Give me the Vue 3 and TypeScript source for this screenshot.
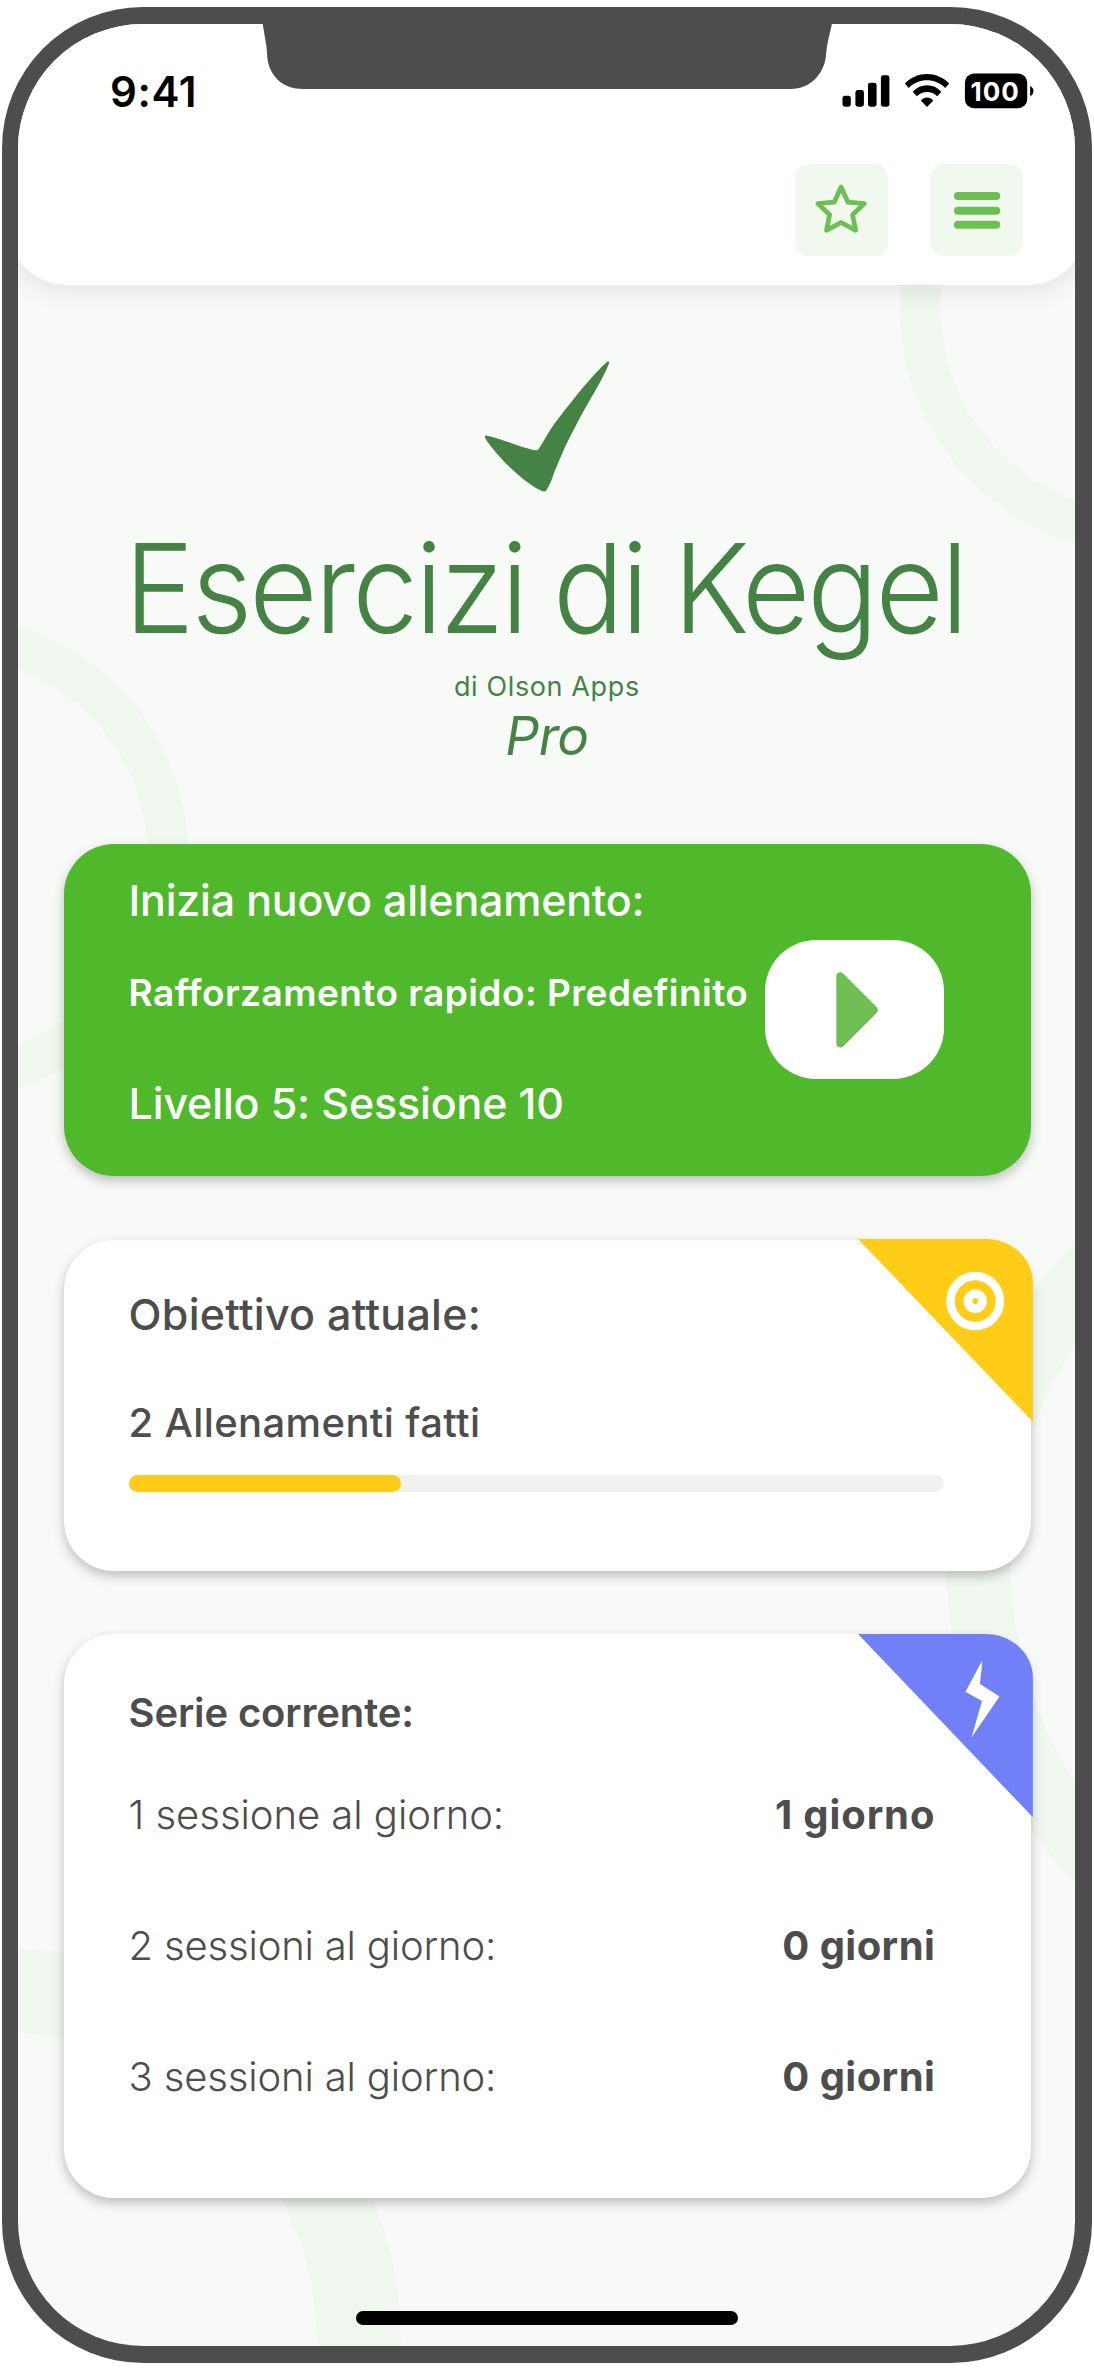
<script setup lang="ts">
interface Streak {
  label: string
  value: string
  labelTracking: string
  valueTracking: string
}

const streaks: Streak[] = [
  { label: '1 sessione al giorno:', value: '1 giorno', labelTracking: '-0.03px', valueTracking: '0.88px' },
  { label: '2 sessioni al giorno:', value: '0 giorni', labelTracking: '-0.17px', valueTracking: '0.45px' },
  { label: '3 sessioni al giorno:', value: '0 giorni', labelTracking: '-0.15px', valueTracking: '0.45px' },
]

const progress = 33.35
</script>

<template>
  <div class="phone">
    <div class="screen">
      <svg class="rings" viewBox="18.5 24.3 1057 2321.4" aria-hidden="true">
        <g fill="none" stroke="#eff7ee">
          <circle cx="1144.8" cy="309" r="224.2" stroke-width="40.5" />
          <circle cx="-52" cy="857.3" r="221" stroke-width="40.5" />
          <circle cx="1411.9" cy="1563" r="433" stroke-width="64" />
          <circle cx="6.5" cy="2344" r="353" stroke-width="84" />
        </g>
      </svg>

      <header class="topbar">
        <div class="status">
          <span class="clock">9:41</span>
          <svg class="status-icons" viewBox="842 73 193 36">
            <rect x="842.5" y="95.7" width="8.3" height="11" rx="2.4" />
            <rect x="855.4" y="90" width="8.5" height="16.7" rx="2.4" />
            <rect x="868" y="82.7" width="8.6" height="24" rx="2.4" />
            <rect x="880.9" y="75.3" width="8.5" height="31.4" rx="2.4" />
            <path d="M904.9 83.6 C917 70.9 937 70.9 949.2 83.6 L945.2 88 C935 77.8 919 77.8 908.7 88Z" />
            <path d="M912.7 91.8 C920.5 83.2 933.5 83.2 941.4 91.8 L937.3 96.3 C931.5 90.6 922.5 90.6 916.8 96.3Z" />
            <path d="M920.8 100.4 C924.3 96.4 929.8 96.4 933.3 100.4 L927 106.9Z" />
            <rect x="964.9" y="73.6" width="62.3" height="34.6" rx="9" />
            <path d="M1030.2 86 C1034.6 88 1034.6 94 1030.2 96.2Z" />
            <text x="995.2" y="100.6" text-anchor="middle">100</text>
          </svg>
        </div>
        <nav class="actions">
          <button class="icon-btn" aria-label="Preferiti">
            <svg width="93" height="92" viewBox="795 163.7 93 92.3">
              <path
                d="M841.1 186.8 L848 202 L864.4 203.4 L852.6 214.5 L855.7 230.2 L841.1 222.4 L826.5 230.2 L829.6 214.5 L817.8 203.4 L834.2 202Z"
                fill="none" stroke="#6dbf53" stroke-width="4.8" stroke-linejoin="round"
              />
            </svg>
          </button>
          <button class="icon-btn" aria-label="Menu">
            <svg width="93" height="92" viewBox="929.7 163.7 93 92.3">
              <path d="M957.6 195.7H996M957.6 210.6H996M957.6 224.7H996" stroke="#6dbf53" stroke-width="8" stroke-linecap="round" />
            </svg>
          </button>
        </nav>
      </header>

      <section class="hero">
        <svg class="logo" viewBox="483 361 128 132" aria-hidden="true">
          <path
            fill="#458345"
            d="M484.8 436.6 C484.6 435.4 485.4 435.3 486.8 435.7 C502 438.8 519 446.5 532.6 449.8 C537.5 451 538 450.2 540 447 C543.5 441.5 546.5 435.5 549.5 431 C556 421 563.5 411.5 571 402.5 C581 389.5 594.5 373.5 605.5 363.2 C608.5 360.6 610 361.2 608.8 364 C603 379.5 588 402 578 421.5 C571.5 434 567.5 441.5 563.5 450.5 C559 461 556.5 466.5 553.5 474.5 C551.5 480.5 549.5 485.5 546.6 490 C545.6 491.8 543.8 491.8 541.8 491 C537.5 489.2 534 487 530 484 C519 476.5 504 463 491 446.5 C487.5 442 485.2 439 484.8 436.6Z"
          />
        </svg>
        <h1>Esercizi di Kegel</h1>
        <p class="byline">di Olson Apps</p>
        <p class="edition">Pro</p>
      </section>

      <main class="cards">
        <section class="card start">
          <div class="start-text">
            <p class="lead">Inizia nuovo allenamento:</p>
            <p class="routine">Rafforzamento rapido: Predefinito</p>
            <p class="level">Livello 5: Sessione 10</p>
          </div>
          <button class="play" aria-label="Avvia">
            <svg width="42" height="76" viewBox="835.6 972 42 76">
              <path
                fill="#6fbe52"
                d="M835.9 976.5 C835.9 972.3 840.3 970.8 843.2 974 L876 1006.8 C878 1008.8 878 1011.2 876 1013.2 L843.2 1046 C840.3 1049 835.9 1047.5 835.9 1043.3Z"
              />
            </svg>
          </button>
        </section>

        <section class="card goal">
          <svg class="corner" viewBox="857.8 1239.3 175 183">
            <path fill="#ffcc17" d="M857.8 1239.3H984.8C1012 1239.3 1032.7 1259 1032.7 1283V1422Z" />
            <ellipse cx="975" cy="1301.4" rx="24.7" ry="25" fill="none" stroke="#fff" stroke-width="8.5" />
            <ellipse cx="975" cy="1301.4" rx="7.3" ry="7.5" fill="none" stroke="#fff" stroke-width="8.8" />
          </svg>
          <p class="goal-title">Obiettivo attuale:</p>
          <p class="goal-count">2 Allenamenti fatti</p>
          <div class="track"><div class="fill" :style="{ width: progress + '%' }"></div></div>
        </section>

        <section class="card streak">
          <svg class="corner" viewBox="857.8 1633.7 175 183">
            <path fill="#7280f7" d="M857.8 1633.7H984.8C1012 1633.7 1032.7 1653.4 1032.7 1677.4V1817Z" />
            <path fill="#fff" d="M982.2 1660 L965.2 1691.4 L981.8 1700.8 L971.4 1737 L999.3 1696.3 L979.8 1683.7Z" />
          </svg>
          <p class="streak-title">Serie corrente:</p>
          <div class="rows">
            <div v-for="row in streaks" :key="row.label" class="row">
              <span class="row-label" :style="{ letterSpacing: row.labelTracking }">{{ row.label }}</span>
              <span class="row-value" :style="{ letterSpacing: row.valueTracking }">{{ row.value }}</span>
            </div>
          </div>
        </section>
      </main>

      <div class="home-indicator"></div>
    </div>

    <svg class="notch" viewBox="262 23 571 67" aria-hidden="true">
      <path fill="#4d4d4d" d="M262.8 23V24.5L266.5 47C267.1 52 267 56 267.8 61C271 77.5 284 89 302.5 89H791C810 89 824.5 74 826 55C826.3 50 827 46 827.8 42L831.8 24.5V23Z" />
    </svg>
  </div>
</template>

<style>
body {
  background: #fff;
}
</style>

<style scoped>
* {
  box-sizing: border-box;
}

p,
h1 {
  margin: 0;
  font-weight: inherit;
  white-space: nowrap;
}

button {
  border: 0;
  padding: 0;
  display: flex;
  align-items: center;
  justify-content: center;
}

svg {
  display: block;
}

.phone {
  position: relative;
  width: 1090.4px;
  height: 2355.6px;
  margin: 7.1px 1.7px 0;
  padding: 17.2px 16.7px 16.9px;
  border-radius: 141px;
  background: #4d4d4d;
  font-family: Inter, 'Liberation Sans', sans-serif;
  color: #4d4d4d;
}

.screen {
  position: relative;
  display: flex;
  flex-direction: column;
  height: 100%;
  overflow: hidden;
  border-radius: 125px;
  background: #f8faf8;
}

.rings {
  position: absolute;
  inset: 0;
  width: 100%;
  height: 100%;
}

.notch {
  position: absolute;
  left: 260.3px;
  top: 15.9px;
  width: 571px;
  height: 67px;
}

.topbar {
  position: relative;
  flex: none;
  height: 260.4px;
  margin: 0 -9.5px;
  padding: 43px 0 0;
  border-radius: 0 0 57px 57px;
  background: #fff;
  box-shadow: 0 4px 26px rgba(40, 50, 40, 0.12);
}

.status {
  display: flex;
  align-items: center;
  justify-content: space-between;
  height: 48px;
  padding: 0 50px 0 101px;
}

.clock {
  position: relative;
  top: 1px;
  font-size: 42px;
  line-height: 48px;
  font-weight: 600;
  letter-spacing: 0.7px;
  color: #000;
}

.status-icons {
  width: 193px;
  height: 36px;
}

.status-icons text {
  font-size: 26px;
  font-weight: 700;
  letter-spacing: 1px;
  fill: #fff;
}

.actions {
  display: flex;
  justify-content: flex-end;
  gap: 41.7px;
  margin-top: 48.4px;
  padding-right: 62px;
}

.icon-btn {
  width: 93px;
  height: 92.3px;
  border-radius: 14px;
  background: #f1f9ef;
}

.hero {
  position: relative;
  flex: none;
  display: flex;
  flex-direction: column;
  align-items: center;
  height: 559.1px;
  padding-top: 76.3px;
  color: #458345;
}

.logo {
  width: 128px;
  height: 132px;
}

h1 {
  margin-top: 35px;
  font-size: 124px;
  line-height: 120px;
  font-weight: 300;
  letter-spacing: -3px;
  word-spacing: -3px;
  transform: translateX(-2px) scaleX(0.95);
}

.byline {
  margin-top: 19.4px;
  font-size: 27px;
  line-height: 40px;
  letter-spacing: 0.62px;
}

.edition {
  margin-top: 4px;
  font-size: 53px;
  line-height: 50px;
  font-style: italic;
  letter-spacing: -0.57px;
}

.cards {
  position: relative;
  display: flex;
  flex-direction: column;
  margin: 0 44.5px 0 45.4px;
}

.card {
  position: relative;
  flex: none;
  padding: 0 86.6px 0 64.8px;
  border-radius: 50px;
  background: #fff;
  box-shadow: 0 5px 12px rgba(0, 0, 0, 0.24);
}

.start {
  display: flex;
  justify-content: space-between;
  height: 332.2px;
  color: #fff;
  background: #50b82b;
}

.start-text {
  padding-top: 31.2px;
}

.lead,
.level {
  font-size: 43px;
  line-height: 50px;
  font-weight: 500;
  letter-spacing: -0.23px;
}

.routine {
  margin-top: 43.3px;
  font-size: 37px;
  line-height: 50px;
  font-weight: 600;
  letter-spacing: 0.45px;
}

.level {
  margin-top: 60px;
  letter-spacing: -0.16px;
}

.play {
  width: 179.3px;
  height: 139.3px;
  margin-top: 96.2px;
  margin-left: -20px;
  padding-right: 1px;
  padding-left: 5px;
  border-radius: 51px;
  background: #fff;
}

.goal {
  height: 331.6px;
  margin-top: 63.7px;
  padding-top: 49.8px;
}

.corner {
  position: absolute;
  top: -0.4px;
  right: -1.9px;
  width: 175px;
  height: 183px;
}

.goal-title {
  font-size: 43px;
  line-height: 50px;
  font-weight: 500;
  letter-spacing: 0.26px;
}

.goal-count {
  margin-top: 58.5px;
  font-size: 40px;
  line-height: 50px;
  font-weight: 500;
  letter-spacing: 0.37px;
}

.track {
  height: 16.7px;
  margin-top: 27px;
  border-radius: 9px;
  background: #f2f0f1;
}

.fill {
  height: 100%;
  border-radius: 9px;
  background: #ffcc17;
}

.streak {
  height: 564px;
  margin-top: 62.7px;
  padding-top: 54px;
}

.streak-title {
  font-size: 40px;
  line-height: 50px;
  font-weight: 600;
  letter-spacing: -0.13px;
}

.rows {
  display: flex;
  flex-direction: column;
  gap: 80.9px;
  margin-top: 51.8px;
  padding-right: 9px;
}

.row {
  display: flex;
  justify-content: space-between;
  line-height: 50px;
  font-size: 40px;
}

.row-label {
  font-weight: 300;
}

.row-value {
  font-weight: 700;
}

.home-indicator {
  position: relative;
  flex: none;
  align-self: center;
  width: 382.7px;
  height: 14px;
  margin-top: 113px;
  border-radius: 7px;
  background: #000;
}
</style>
